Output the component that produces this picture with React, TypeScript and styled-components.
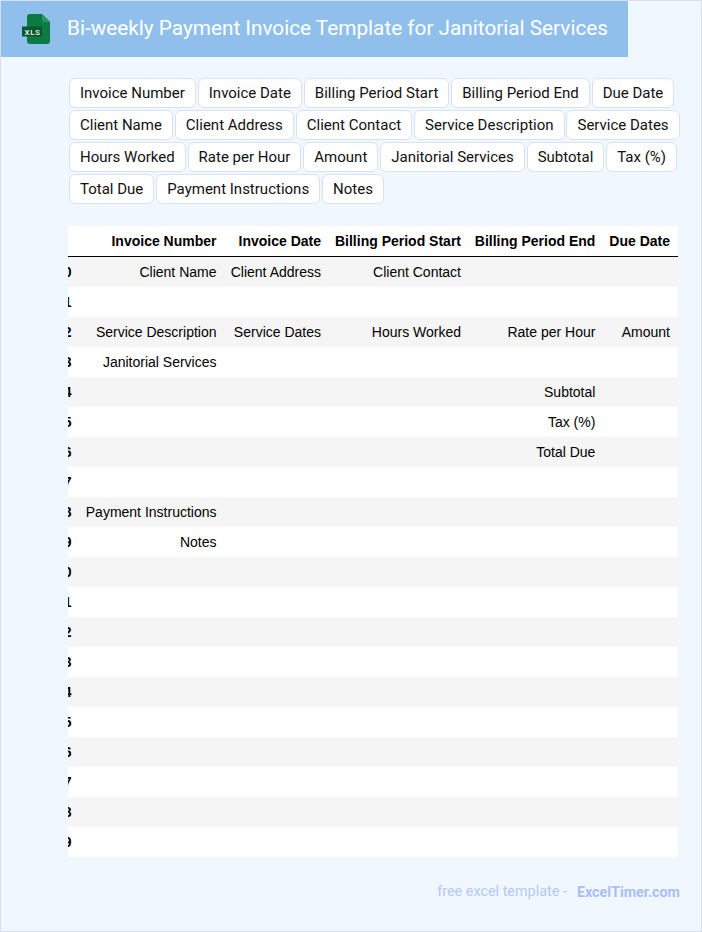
import React from "react";
import styled, { createGlobalStyle } from "styled-components";

const Global = createGlobalStyle`
  html, body { margin: 0; padding: 0; background: #f0f7ff; }
  body { font-family: Roboto, "Liberation Sans", sans-serif; }
`;

const Page = styled.div`
  box-sizing: border-box;
  width: 702px;
  height: 932px;
  border: 1px solid #d6e0ee;
  background: #f0f7ff;
  display: flex;
  flex-direction: column;
  overflow: hidden;
`;

const Banner = styled.header`
  width: 627px;
  height: 56px;
  flex: none;
  background: #90bfec;
  display: flex;
  align-items: center;
  gap: 16px;
  padding-left: 21px;
  box-sizing: border-box;
`;

const Title = styled.h1`
  margin: 0 0 2px;
  font-size: 20.75px;
  font-weight: 400;
  color: #fff;
  white-space: nowrap;
`;

const Tags = styled.div`
  display: flex;
  flex-wrap: wrap;
  gap: 2px 1.95px;
  margin: 21px 20px 0 68px;
`;

const Tag = styled.span`
  box-sizing: border-box;
  height: 30px;
  padding: 0 10px;
  background: #fff;
  border: 1px solid #d8e2f0;
  border-radius: 6px;
  font-size: 15px;
  line-height: 28px;
  color: #111;
  white-space: nowrap;
`;

const TableFrame = styled.div`
  margin: 22px 23px 0 67px;
  overflow: hidden;
  background: #fff;
`;

const Table = styled.table`
  border-collapse: collapse;
  table-layout: fixed;
  width: 637px;
  margin-left: -27px;
  font-family: "Liberation Sans", Arial, sans-serif;
  font-size: 14px;
  color: #000;
`;

const HeadCell = styled.th`
  height: 30px;
  padding: 0 7px 0 0;
  text-align: right;
  font-weight: 700;
  white-space: nowrap;
  border-bottom: 1px solid #000;

  &:last-child {
    padding-right: 8px;
  }
`;

const Row = styled.tr<{ $striped: boolean }>`
  background: ${(p) => (p.$striped ? "#f5f5f5" : "#fff")};
`;

const IndexCell = styled.th`
  height: 30px;
  padding: 0 2.5px 0 0;
  text-align: right;
  font-weight: 700;
`;

const Cell = styled.td`
  height: 30px;
  padding: 0 7px 0 0;
  text-align: right;
  white-space: nowrap;

  &:last-child {
    padding-right: 8px;
  }
`;

const Footer = styled.footer`
  display: flex;
  justify-content: flex-end;
  gap: 10px;
  margin: 26px 21px 0 0;
  font-size: 14.4px;
  line-height: 18px;
  color: #b5c8f5;
`;

const Brand = styled.strong`
  font-weight: 700;
  font-size: 14.3px;
  color: #a9bff2;
`;

const FileIcon = () => (
  <svg width="29" height="32" viewBox="0 0 29 32" aria-hidden="true">
    <path d="M8 1h12l8 8v19a3 3 0 0 1-3 3H8a3 3 0 0 1-3-3V4a3 3 0 0 1 3-3z" fill="#0b7a43" />
    <path d="M20 1l8 8h-6a2 2 0 0 1-2-2z" fill="#2f9163" />
    <rect x="0" y="13.5" width="20" height="10" fill="#06592f" />
    <text x="10.5" y="21.5" textAnchor="middle" fontFamily="Roboto, sans-serif" fontSize="8" fontWeight="500" letterSpacing="0.6" fill="#f2f8f4">
      XLS
    </text>
  </svg>
);

const tags = [
  "Invoice Number", "Invoice Date", "Billing Period Start", "Billing Period End", "Due Date",
  "Client Name", "Client Address", "Client Contact", "Service Description", "Service Dates",
  "Hours Worked", "Rate per Hour", "Amount", "Janitorial Services", "Subtotal", "Tax (%)",
  "Total Due", "Payment Instructions", "Notes",
];

const columns = [
  { name: "Invoice Number", width: 149.5 },
  { name: "Invoice Date", width: 104.5 },
  { name: "Billing Period Start", width: 140 },
  { name: "Billing Period End", width: 134.4 },
  { name: "Due Date", width: 75.6 },
];

const rows: string[][] = [
  ["Client Name", "Client Address", "Client Contact", "", ""],
  ["", "", "", "", ""],
  ["Service Description", "Service Dates", "Hours Worked", "Rate per Hour", "Amount"],
  ["Janitorial Services", "", "", "", ""],
  ["", "", "", "Subtotal", ""],
  ["", "", "", "Tax (%)", ""],
  ["", "", "", "Total Due", ""],
  ["", "", "", "", ""],
  ["Payment Instructions", "", "", "", ""],
  ["Notes", "", "", "", ""],
  ...Array.from({ length: 10 }, () => ["", "", "", "", ""]),
];

export default function App() {
  return (
    <>
      <Global />
      <Page>
        <Banner>
          <FileIcon />
          <Title>Bi-weekly Payment Invoice Template for Janitorial Services</Title>
        </Banner>
        <Tags>
          {tags.map((t) => (
            <Tag key={t}>{t}</Tag>
          ))}
        </Tags>
        <TableFrame>
          <Table>
            <colgroup>
              <col style={{ width: 33 }} />
              {columns.map((c) => (
                <col key={c.name} style={{ width: c.width }} />
              ))}
            </colgroup>
            <thead>
              <tr>
                <HeadCell />
                {columns.map((c) => (
                  <HeadCell key={c.name}>{c.name}</HeadCell>
                ))}
              </tr>
            </thead>
            <tbody>
              {rows.map((r, i) => (
                <Row key={i} $striped={i % 2 === 0}>
                  <IndexCell>{i}</IndexCell>
                  {r.map((v, j) => (
                    <Cell key={j}>{v}</Cell>
                  ))}
                </Row>
              ))}
            </tbody>
          </Table>
        </TableFrame>
        <Footer>
          <span>free excel template -</span>
          <Brand>ExcelTimer.com</Brand>
        </Footer>
      </Page>
    </>
  );
}
